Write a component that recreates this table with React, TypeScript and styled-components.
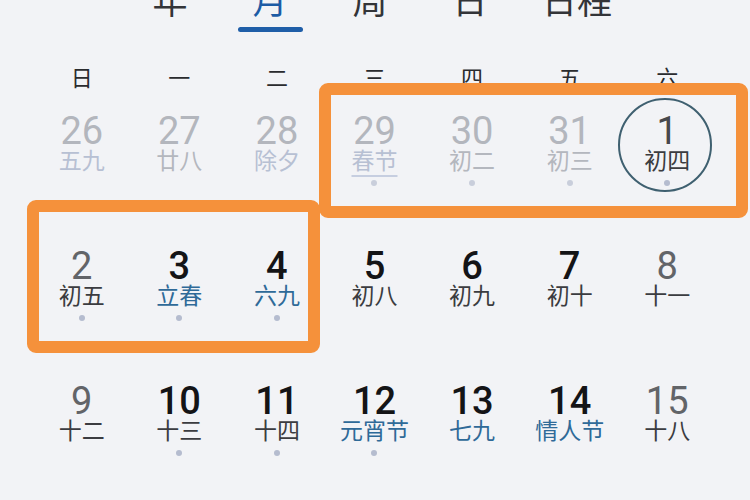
import React from 'react';
import styled, { createGlobalStyle } from 'styled-components';

const Global = createGlobalStyle`
  html, body { margin: 0; padding: 0; background: #f2f3f6; overflow: hidden; }
  body { font-family: Roboto, "Noto Sans CJK SC", sans-serif; }
`;

const Page = styled.div`
  width: 750px;
  height: 500px;
  overflow: hidden;
  background: #f2f3f6;
`;

const TabBar = styled.div`
  display: grid;
  grid-template-columns: 100px 100px 100px 100px 114px;
  justify-items: center;
  align-items: start;
  padding-left: 120px;
  margin-top: -18px;
`;

const Tab = styled.div<{ $active?: boolean }>`
  display: flex;
  flex-direction: column;
  align-items: center;
  font-family: "Noto Sans CJK SC", sans-serif;
  font-size: 35px;
  line-height: 34px;
  color: ${(p) => (p.$active ? '#1d5ba5' : '#333438')};
`;

const TabLine = styled.div`
  width: 65px;
  height: 5px;
  border-radius: 3px;
  background: #1f5ea8;
  margin-top: 11px;
`;

const WeekRow = styled.div`
  display: grid;
  grid-template-columns: repeat(7, 1fr);
  width: 683px;
  margin: 32px 0 0 33px;
`;

const WeekDay = styled.div`
  text-align: center;
  font-family: "Noto Sans CJK SC", sans-serif;
  font-size: 22px;
  line-height: 24px;
  color: #2a2b2e;
`;

const Body = styled.div`
  position: relative;
  width: 683px;
  margin: 27px 0 0 33px;
`;

const DayGrid = styled.div`
  display: grid;
  grid-template-columns: repeat(7, 1fr);
  grid-auto-rows: 135px;
`;

const Cell = styled.div`
  position: relative;
  display: flex;
  flex-direction: column;
  align-items: center;
`;

type NumTone = 'prev' | 'weekend' | 'weekday' | 'circled';
const numColor: Record<NumTone, string> = {
  prev: '#b3b6bd',
  weekend: '#626468',
  weekday: '#141416',
  circled: '#46484c',
};

const Num = styled.div<{ $tone: NumTone }>`
  position: relative;
  font-family: Roboto, sans-serif;
  font-size: 38px;
  line-height: 32px;
  font-weight: ${(p) => (p.$tone === 'weekday' ? 500 : 400)};
  color: ${(p) => numColor[p.$tone]};
`;

type LunarTone = 'prev' | 'prevBlue' | 'normal' | 'fest';
const lunarColor: Record<LunarTone, string> = {
  prev: '#b4b7be',
  prevBlue: '#b7c0d3',
  normal: '#3b3c40',
  fest: '#2f6a98',
};

const Lunar = styled.div<{ $tone: LunarTone; $underline?: boolean }>`
  position: relative;
  font-family: "Noto Sans CJK SC", sans-serif;
  font-size: 23px;
  line-height: 24px;
  color: ${(p) => lunarColor[p.$tone]};
  text-decoration: ${(p) => (p.$underline ? 'underline' : 'none')};
  text-decoration-color: #c6cee0;
  text-decoration-thickness: 2px;
  text-underline-offset: 6px;
`;

const Dot = styled.div<{ $show?: boolean; $faint?: boolean }>`
  width: 6px;
  height: 6px;
  border-radius: 50%;
  margin-top: 9px;
  background: ${(p) => (p.$faint ? '#c9cedb' : '#b5bccf')};
  visibility: ${(p) => (p.$show ? 'visible' : 'hidden')};
`;

const Ring = styled.div`
  position: absolute;
  top: -17px;
  left: 50%;
  width: 94px;
  height: 94px;
  margin-left: -49px;
  box-sizing: border-box;
  border: 2px solid #3f6070;
  border-radius: 50%;
`;

const Frame = styled.div`
  position: absolute;
  box-sizing: border-box;
  border: 12px solid #f5913b;
  border-radius: 9px;
  pointer-events: none;
`;

type Day = {
  n: number;
  l: string;
  nt: NumTone;
  lt: LunarTone;
  dot?: boolean;
  faint?: boolean;
  ring?: boolean;
  underline?: boolean;
};

const days: Day[] = [
  { n: 26, l: '五九', nt: 'prev', lt: 'prevBlue' },
  { n: 27, l: '廿八', nt: 'prev', lt: 'prev' },
  { n: 28, l: '除夕', nt: 'prev', lt: 'prevBlue' },
  { n: 29, l: '春节', nt: 'prev', lt: 'prevBlue', dot: true, faint: true, underline: true },
  { n: 30, l: '初二', nt: 'prev', lt: 'prev', dot: true, faint: true },
  { n: 31, l: '初三', nt: 'prev', lt: 'prev', dot: true, faint: true },
  { n: 1, l: '初四', nt: 'circled', lt: 'normal', dot: true, ring: true },
  { n: 2, l: '初五', nt: 'weekend', lt: 'normal', dot: true },
  { n: 3, l: '立春', nt: 'weekday', lt: 'fest', dot: true },
  { n: 4, l: '六九', nt: 'weekday', lt: 'fest', dot: true },
  { n: 5, l: '初八', nt: 'weekday', lt: 'normal' },
  { n: 6, l: '初九', nt: 'weekday', lt: 'normal' },
  { n: 7, l: '初十', nt: 'weekday', lt: 'normal' },
  { n: 8, l: '十一', nt: 'weekend', lt: 'normal' },
  { n: 9, l: '十二', nt: 'weekend', lt: 'normal' },
  { n: 10, l: '十三', nt: 'weekday', lt: 'normal', dot: true },
  { n: 11, l: '十四', nt: 'weekday', lt: 'normal', dot: true },
  { n: 12, l: '元宵节', nt: 'weekday', lt: 'fest', dot: true },
  { n: 13, l: '七九', nt: 'weekday', lt: 'fest' },
  { n: 14, l: '情人节', nt: 'weekday', lt: 'fest' },
  { n: 15, l: '十八', nt: 'weekend', lt: 'normal' },
];

const tabs = ['年', '月', '周', '日', '日程'];
const weekdays = ['日', '一', '二', '三', '四', '五', '六'];

export default function App() {
  return (
    <Page>
      <Global />
      <TabBar>
        {tabs.map((t) => (
          <Tab key={t} $active={t === '月'}>
            {t}
            {t === '月' && <TabLine />}
          </Tab>
        ))}
      </TabBar>
      <WeekRow>
        {weekdays.map((w) => (
          <WeekDay key={w}>{w}</WeekDay>
        ))}
      </WeekRow>
      <Body>
        <DayGrid>
          {days.map((d) => (
            <Cell key={`${d.nt}-${d.n}`}>
              {d.ring && <Ring />}
              <Num $tone={d.nt}>{d.n}</Num>
              <Lunar $tone={d.lt} $underline={d.underline}>
                {d.l}
              </Lunar>
              <Dot $show={d.dot} $faint={d.faint} />
            </Cell>
          ))}
        </DayGrid>
        <Frame style={{ left: 286, top: -32, width: 429, height: 135 }} />
        <Frame style={{ left: -6, top: 85, width: 293, height: 153 }} />
      </Body>
    </Page>
  );
}
